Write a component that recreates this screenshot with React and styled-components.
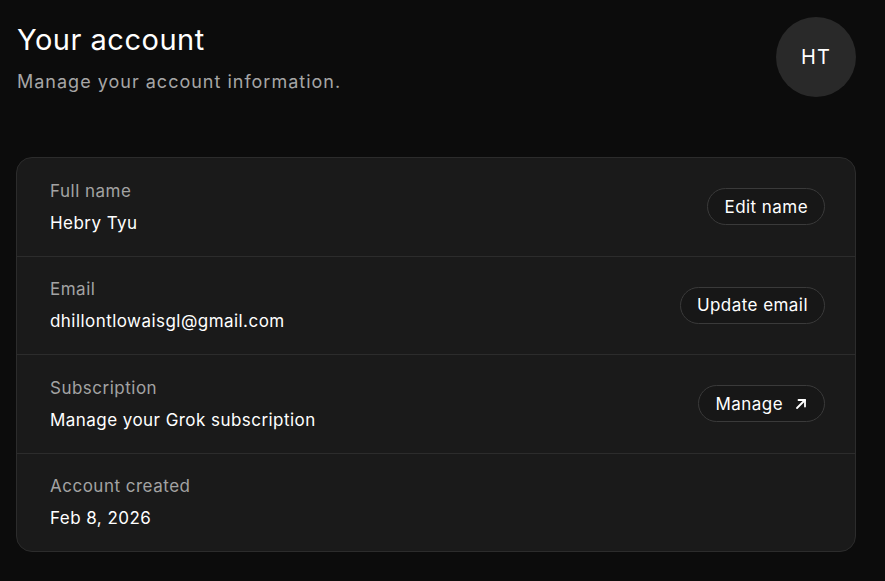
import React from 'react';
import styled, { createGlobalStyle } from 'styled-components';

const Global = createGlobalStyle`
  html, body {
    margin: 0;
    background: #0c0c0c;
    font-family: Inter, "Noto Sans", sans-serif;
    color: #fff;
  }
`

const Page = styled.div`
  padding: 17px 29px 30px 16px;
`
const Header = styled.div`
  display: flex;
  justify-content: space-between;
  align-items: flex-start;
`
const Titles = styled.div`
  padding-top: 4px;
  padding-left: 1px;
`
const Title = styled.h1`
  margin: 0;
  font-size: 29px;
  font-weight: 400;
  line-height: 38px;
  letter-spacing: 0.5px;
`
const Subtitle = styled.p`
  margin: 10px 0 0;
  font-size: 18px;
  line-height: 26px;
  color: #a6a6a6;
  letter-spacing: 1px;
`
const Avatar = styled.div`
  width: 80px;
  height: 80px;
  border-radius: 50%;
  background: #292929;
  display: flex;
  align-items: center;
  justify-content: center;
  font-size: 20px;
  letter-spacing: 1px;
`
const Card = styled.div`
  margin-top: 60px;
  background: #1a1a1a;
  border: 1px solid #2c2c2c;
  border-radius: 16px;
`
const Row = styled.div`
  display: flex;
  align-items: center;
  justify-content: space-between;
  padding: 21px 30px 21px 33px;
  height: 55.5px;
  & + & {
    border-top: 1px solid #2c2c2c;
  }
`
const Info = styled.div`
  display: flex;
  flex-direction: column;
  gap: 8px;
`
const Label = styled.span`
  font-size: 17px;
  line-height: 24px;
  color: #a3a3a3;
  letter-spacing: 0.5px;
`
const Value = styled.span`
  font-size: 17px;
  line-height: 24px;
  color: #fff;
  letter-spacing: 0.45px;
`
const Button = styled.button`
  display: inline-flex;
  align-items: center;
  gap: 11px;
  height: 37px;
  padding: 0 16px;
  border-radius: 999px;
  border: 1px solid #3a3a3a;
  background: #171717;
  color: #fff;
  font-family: inherit;
  font-size: 17px;
  letter-spacing: 0.45px;
  cursor: pointer;
`

const Arrow = () => (
  <svg width="14" height="14" viewBox="0 0 14 14" fill="none" stroke="#fff" strokeWidth="1.8" strokeLinecap="round" strokeLinejoin="round">
    <path d="M3 11 L11 3" />
    <path d="M4.5 3 H11 V9.5" />
  </svg>
)

const rows = [
  { label: 'Full name', value: 'Hebry Tyu', action: 'Edit name' },
  { label: 'Email', value: 'dhillontlowaisgl@gmail.com', action: 'Update email' },
  { label: 'Subscription', value: 'Manage your Grok subscription', action: 'Manage', external: true },
  { label: 'Account created', value: 'Feb 8, 2026' },
]

export default function App() {
  return (
    <Page>
      <Global />
      <Header>
        <Titles>
          <Title>Your account</Title>
          <Subtitle>Manage your account information.</Subtitle>
        </Titles>
        <Avatar>HT</Avatar>
      </Header>
      <Card>
        {rows.map((r) => (
          <Row key={r.label}>
            <Info>
              <Label>{r.label}</Label>
              <Value>{r.value}</Value>
            </Info>
            {r.action && (
              <Button>
                {r.action}
                {r.external && <Arrow />}
              </Button>
            )}
          </Row>
        ))}
      </Card>
    </Page>
  )
}
